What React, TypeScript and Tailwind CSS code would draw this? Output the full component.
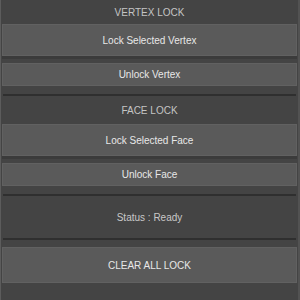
const font = { fontFamily: '"Liberation Sans", Arial, sans-serif' }

function PanelButton({ label, tall }: { label: string; tall?: boolean }) {
  return (
    <button
      className={`flex w-full items-center justify-center border border-[#616161] bg-[#5a5a5a] text-[10px] text-[#e8e8e8] ${
        tall ? 'h-[32px]' : 'h-[23px]'
      }`}
      type="button"
    >
      {label}
    </button>
  )
}

function SectionLabel({ label }: { label: string }) {
  return <div className="flex h-[24px] items-center justify-center text-[10px] text-[#c4c4c4]">{label}</div>
}

function Divider() {
  return <div className="mx-[1px] h-[2px] bg-[#2f2f2f]" />
}

export default function App() {
  return (
    <div className="flex h-[300px] w-[300px] bg-[#444444]" style={font}>
      <div className="w-[1px] bg-[#5c5c5c]" />
      <div className="flex flex-1 flex-col px-[1px]">
        {/* Vertex */}
        <SectionLabel label="VERTEX LOCK" />
        <PanelButton label="Lock Selected Vertex" tall />
        <div className="h-[3px] bg-[#3b3b3b]" />
        <div className="h-[4px]" />
        <PanelButton label="Unlock Vertex" />
        <div className="h-[8px]" />
        <Divider />

        {/* Face */}
        <div className="flex h-[28px] items-center justify-center text-[10px] text-[#c4c4c4]">FACE LOCK</div>
        <PanelButton label="Lock Selected Face" tall />
        <div className="h-[3px] bg-[#3b3b3b]" />
        <div className="h-[4px]" />
        <PanelButton label="Unlock Face" />
        <div className="h-[8px]" />
        <Divider />

        {/* Status */}
        <div className="flex h-[42px] items-center justify-center text-[10px] text-[#c8c8c8]">Status : Ready</div>
        <Divider />
        <div className="h-[7px]" />
        <button
          className="flex h-[36px] w-full items-center justify-center border border-[#616161] bg-[#5a5a5a] text-[10px] text-[#e8e8e8]"
          type="button"
        >
          CLEAR ALL LOCK
        </button>
      </div>
      <div className="w-[2px] bg-[#525252]" />
    </div>
  )
}
